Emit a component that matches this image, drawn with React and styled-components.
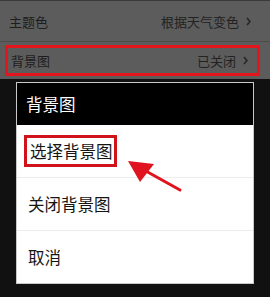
import React from 'react';
import styled, { createGlobalStyle } from 'styled-components';

const GlobalStyle = createGlobalStyle`
  html, body {
    margin: 0;
    padding: 0;
    background: #111;
  }
  body {
    font-family: "Noto Sans CJK SC", "Noto Sans", sans-serif;
  }
`;

const Screen = styled.div`
  position: relative;
  width: 270px;
  height: 297px;
  overflow: hidden;
  background: #111;
`;

const Settings = styled.div`
  background: #5c5c5c;
  border-top: 1px solid #3a3a3a;
  padding-bottom: 3px;
`;

const Row = styled.div`
  display: flex;
  align-items: center;
  justify-content: space-between;
  box-sizing: border-box;
  height: ${(p) => (p.$boxed ? '31px' : '41px')};
  margin: ${(p) => (p.$boxed ? '3px 10px 0 5px' : '0')};
  padding: ${(p) => (p.$boxed ? '0 9px 0 3px' : '0 19px 0 9px')};
  border: ${(p) => (p.$boxed ? '3px solid #e3151d' : 'none')};
  border-bottom: ${(p) => (p.$boxed ? '3px solid #e3151d' : '1px solid #4c4c4c')};
  color: #1e1e1e;
  font-size: 13px;
`;

const Value = styled.span`
  display: flex;
  align-items: center;
  gap: 7px;
  color: #222;
`;

const Chevron = () => (
  <svg width="5" height="9" viewBox="0 0 5 9">
    <polyline points="1,1 4,4.5 1,8" fill="none" stroke="#262626" strokeWidth="1.6" />
  </svg>
);

const Dialog = styled.div`
  margin: 3px 16px 0 16px;
  border: 1px solid #c9c9c9;
  background: #fff;
`;

const DialogHeader = styled.div`
  display: flex;
  align-items: center;
  height: 42px;
  padding-left: 9px;
  background: #000;
  color: #fff;
  font-size: 16.5px;
`;

const Item = styled.div`
  display: flex;
  align-items: center;
  height: 52px;
  padding-left: 11px;
  color: #151515;
  font-size: 16.5px;
  border-top: ${(p) => (p.$first ? 'none' : '1px solid #ececec')};
`;

const Marked = styled.span`
  display: inline-flex;
  align-items: center;
  height: 26px;
  margin-left: -4px;
  padding: 0 1px 0 3px;
  border: 3px solid #d0121b;
`;

const Arrow = styled.svg`
  position: absolute;
  left: 124px;
  top: 156px;
  width: 62px;
  height: 40px;
`;

export default function App() {
  return (
    <Screen>
      <GlobalStyle />
      <Settings>
        <Row>
          <span>主题色</span>
          <Value>根据天气变色<Chevron /></Value>
        </Row>
        <Row $boxed>
          <span>背景图</span>
          <Value>已关闭<Chevron /></Value>
        </Row>
      </Settings>
      <Dialog>
        <DialogHeader>背景图</DialogHeader>
        <Item $first>
          <Marked>选择背景图</Marked>
        </Item>
        <Item>关闭背景图</Item>
        <Item>取消</Item>
      </Dialog>
      <Arrow viewBox="0 0 62 40">
        <line x1="56" y1="34" x2="20" y2="14" stroke="#e0141e" strokeWidth="3" strokeLinecap="round" />
        <polygon points="4,5 30,8 16,26" fill="#e0141e" />
      </Arrow>
    </Screen>
  );
}
